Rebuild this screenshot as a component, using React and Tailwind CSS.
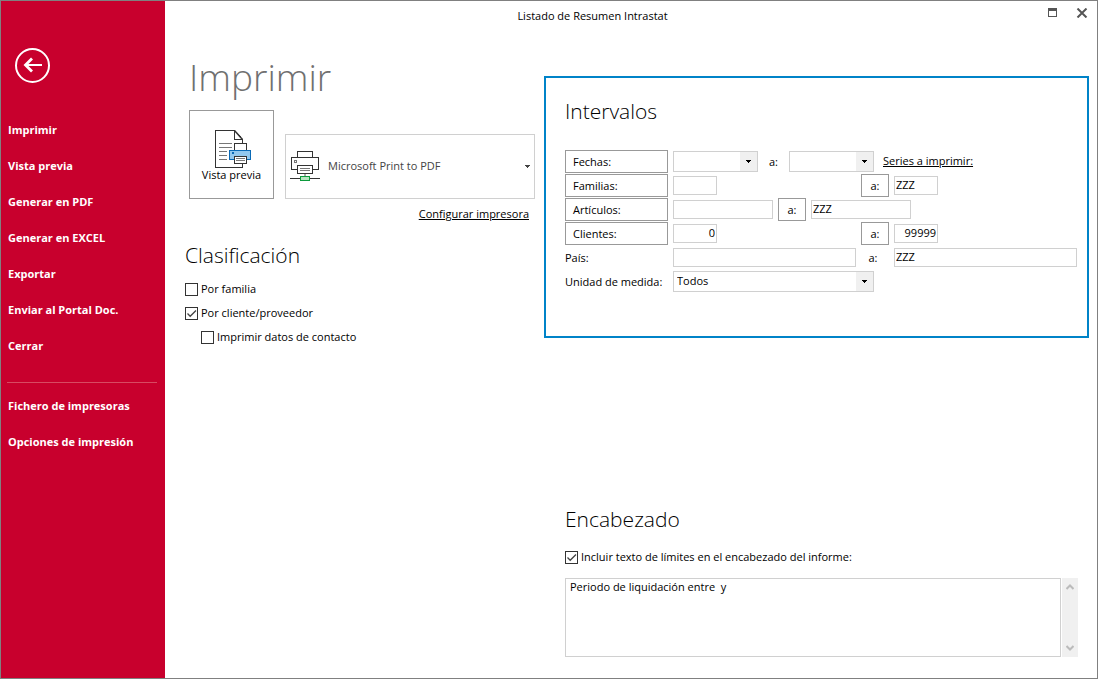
import { useState } from 'react';

const mainActions = [
  'Imprimir',
  'Vista previa',
  'Generar en PDF',
  'Generar en EXCEL',
  'Exportar',
  'Enviar al Portal Doc.',
  'Cerrar',
];

const extraActions = ['Fichero de impresoras', 'Opciones de impresión'];

const BackIcon = () => (
  <svg width="36" height="36" viewBox="0 0 36 36" fill="none" stroke="#fff">
    <circle cx="17.5" cy="17.5" r="16.5" strokeWidth="2" />
    <path d="M10 17H27" strokeWidth="2" />
    <path d="M17 10.5L10.5 17L17 23.5" strokeWidth="2.8" />
  </svg>
);

const PreviewIcon = () => (
  <svg
    width="38"
    height="39"
    viewBox="0 0 38 39"
    fill="#fff"
    stroke="#333"
    shapeRendering="crispEdges"
  >
    <path d="M1.5 1.5H20.5L28.5 10.5V38.5H1.5Z" />
    <path d="M20.5 1.5V10.5H28.5" />
    <path
      d="M20.5 1.5L28.5 10.5"
      shapeRendering="geometricPrecision"
      strokeWidth="1.5"
    />
    <path
      d="M5 14.5H18M5 18.5H18M5 22.5H13M5 26.5H13M5 30.5H13"
      stroke="#777"
    />
    <path d="M20.5 14.5H32.5V21.5H20.5Z" />
    <path d="M15.5 21.5H36.5V30.5H15.5Z" fill="#92c8ee" stroke="#0a6ab6" />
    <path d="M18 23H20V25H18Z" fill="#0a6ab6" stroke="none" />
    <path d="M20.5 27.5H32.5V34.5H20.5Z" />
    <path d="M22 29.5H31M22 31.5H31" stroke="#777" />
  </svg>
);

const PrinterIcon = () => (
  <svg
    width="30"
    height="31"
    viewBox="0 0 30 31"
    fill="#fff"
    stroke="#333"
    shapeRendering="crispEdges"
  >
    <path d="M7.5 0.5H22.5V7.5H7.5Z" />
    <path d="M1.5 6.5H28.5V18.5H1.5Z" />
    <path d="M4.5 9.5H6.5V11.5H4.5Z" stroke="#777" />
    <path d="M7.5 14.5H22.5V22.5H7.5Z" />
    <path d="M10 17.5H20M10 19.5H20" stroke="#777" />
    <path d="M15 23V25" stroke="#aaa" strokeWidth="2" />
    <path d="M0 27.5H30" />
    <path d="M10.5 25.5H19.5V29.5H10.5Z" fill="#b5e3bf" stroke="#0c9a3c" />
  </svg>
);

const Arrow = () => (
  <svg width="5" height="3" viewBox="0 0 5 3" shapeRendering="crispEdges">
    <path d="M0 0H5V1H4V2H3V3H2V2H1V1H0Z" fill="currentColor" />
  </svg>
);

const Checkbox = ({ id, label, checked, onChange }) => (
  <div className="flex h-6 items-center gap-[3px]">
    <span className="grid">
      <input
        id={id}
        type="checkbox"
        checked={checked}
        onChange={e => onChange(e.target.checked)}
        className="col-start-1 row-start-1 size-[13px] appearance-none border border-[#333] bg-white"
      />
      {checked && (
        <svg
          viewBox="0 0 13 13"
          className="pointer-events-none col-start-1 row-start-1 size-[13px]"
          fill="none"
          stroke="#444"
          strokeWidth="1.3"
        >
          <path d="M2.5 6.5L5.2 9.3L11 3.5" />
        </svg>
      )}
    </span>
    <label htmlFor={id}>{label}</label>
  </div>
);

const Select = ({ label, id, options, className }) => (
  <div
    className={`flex h-[21px] shrink-0 border border-[#d0d0d0] bg-white ${className}`}
  >
    <div className="relative flex flex-1">
      <select
        id={id}
        aria-label={label}
        className="w-full appearance-none bg-transparent pl-[3px] outline-none"
      >
        {options.map(option => (
          <option key={option}>{option}</option>
        ))}
      </select>
      <span className="pointer-events-none absolute inset-y-0 right-0 flex w-[17px] items-center justify-center bg-[#f0f0f0]">
        <Arrow />
      </span>
    </div>
  </div>
);

const Field = ({ label, id, value = '', className }) => (
  <input
    id={id}
    type="text"
    aria-label={label}
    defaultValue={value}
    className={`h-[19px] border border-[#d0d0d0] bg-white px-px pb-px outline-none ${className}`}
  />
);

const BoxButton = ({ children, className }) => (
  <button
    type="button"
    className={`h-[23px] shrink-0 border border-[#999] bg-white pt-[2px] ${className}`}
  >
    {children}
  </button>
);

const Row = ({ label, plain, htmlFor, children }) => (
  <div className="flex h-6 items-center gap-[5px]">
    {plain ? (
      <label
        htmlFor={htmlFor}
        className="w-[103px] shrink-0 pt-[2px] whitespace-nowrap"
      >
        {label}
      </label>
    ) : (
      <BoxButton className="w-[103px] pl-[7px] text-left">{label}</BoxButton>
    )}
    {children}
  </div>
);

const Range = ({ children }) => (
  <div className="grid flex-1 grid-cols-[1fr_28px_1fr] items-center gap-[5px]">
    {children}
  </div>
);

const SectionTitle = ({ children }) => (
  <h2 className="text-[21px] leading-8 font-light">{children}</h2>
);

const Sidebar = () => (
  <nav className="flex w-[164px] shrink-0 flex-col bg-[#c8002d] font-bold text-white">
    <button
      type="button"
      aria-label="Volver"
      className="mt-[47px] ml-[14px] size-9"
    >
      <BackIcon />
    </button>
    <div className="mt-[29px] flex flex-col">
      {mainActions.map(action => (
        <button
          key={action}
          type="button"
          className="h-9 pb-px pl-[7px] text-left"
        >
          {action}
        </button>
      ))}
    </div>
    <hr className="mt-[17px] mr-2 mb-[6px] ml-[6px] border-[#d84a62]" />
    <div className="flex flex-col">
      {extraActions.map(action => (
        <button
          key={action}
          type="button"
          className="h-9 pb-px pl-[7px] text-left"
        >
          {action}
        </button>
      ))}
    </div>
  </nav>
);

const TitleBar = () => (
  <header className="flex h-[30px] items-center">
    <div className="flex-1 text-center">Listado de Resumen Intrastat</div>
    <div className="flex w-[77px] items-center justify-end gap-[19px] pr-[9px] pb-[7px]">
      <button type="button" aria-label="Maximizar">
        <svg width="9" height="9" viewBox="0 0 9 9" shapeRendering="crispEdges">
          <path d="M0.5 0.5H8.5V8.5H0.5Z" fill="none" stroke="#555" />
          <path d="M0 0H9V3H0Z" fill="#555" />
        </svg>
      </button>
      <button type="button" aria-label="Cerrar ventana">
        <svg width="12" height="10" viewBox="0 0 12 10">
          <path
            d="M1.5 0.5L10.5 9.5M10.5 0.5L1.5 9.5"
            stroke="#555"
            strokeWidth="2"
          />
        </svg>
      </button>
    </div>
  </header>
);

const Intervals = () => (
  <section className="border-2 border-[#0083c8] pt-[17px] pr-[10px] pb-[43px] pl-[19px]">
    <SectionTitle>Intervalos</SectionTitle>
    <div className="mt-[22px]">
      <Row label="Fechas:">
        <Select label="Fecha desde" options={['']} className="w-[85px]" />
        <span className="w-[21px] pt-[2px] text-center">a:</span>
        <Select label="Fecha hasta" options={['']} className="w-[85px]" />
        <a href="#series" className="ml-1 underline">
          Series a imprimir:
        </a>
      </Row>
      <Row label="Familias:">
        <Range>
          <Field label="Familia desde" className="w-[44px]" />
          <BoxButton>a:</BoxButton>
          <Field label="Familia hasta" value="ZZZ" className="w-[44px]" />
        </Range>
      </Row>
      <Row label="Artículos:">
        <Field label="Artículo desde" className="w-[100px]" />
        <BoxButton className="w-[28px]">a:</BoxButton>
        <Field label="Artículo hasta" value="ZZZ" className="w-[100px]" />
      </Row>
      <Row label="Clientes:">
        <Range>
          <Field
            label="Cliente desde"
            value="0"
            className="w-[44px] text-right"
          />
          <BoxButton>a:</BoxButton>
          <Field
            label="Cliente hasta"
            value="99999"
            className="w-[44px] text-right"
          />
        </Range>
      </Row>
      <Row label="País:" plain htmlFor="pais">
        <Range>
          <Field id="pais" className="w-full" />
          <span className="pt-[2px] pr-1 text-center">a:</span>
          <Field label="País hasta" value="ZZZ" className="w-full" />
        </Range>
      </Row>
      <Row label="Unidad de medida:" plain htmlFor="unidad">
        <Select id="unidad" options={['Todos']} className="w-[201px]" />
      </Row>
    </div>
  </section>
);

const Heading = ({ text, setText, include, setInclude }) => (
  <section className="mt-auto pr-[11px] pb-[21px] pl-[21px]">
    <SectionTitle>Encabezado</SectionTitle>
    <div className="mt-[10px]">
      <Checkbox
        id="incluir"
        label="Incluir texto de límites en el encabezado del informe:"
        checked={include}
        onChange={setInclude}
      />
    </div>
    <div className="mt-[9px] flex h-[79px] gap-px">
      <textarea
        aria-label="Texto del encabezado"
        value={text}
        onChange={e => setText(e.target.value)}
        className="flex-1 resize-none border border-[#d0d0d0] px-1 leading-4 outline-none"
      />
      <div className="flex w-4 flex-col items-center justify-between bg-[#f0f0f0] py-[6px]">
        <svg width="8" height="6" viewBox="0 0 8 6" fill="none">
          <path d="M0.5 5L4 1.5L7.5 5" stroke="#bbb" strokeWidth="2" />
        </svg>
        <svg width="8" height="6" viewBox="0 0 8 6" fill="none">
          <path d="M0.5 1L4 4.5L7.5 1" stroke="#bbb" strokeWidth="2" />
        </svg>
      </div>
    </div>
  </section>
);

const App = () => {
  const [byFamily, setByFamily] = useState(false);
  const [byClient, setByClient] = useState(true);
  const [contact, setContact] = useState(false);
  const [include, setInclude] = useState(true);
  const [text, setText] = useState('Periodo de liquidación entre  y');

  return (
    <div className="flex min-h-screen border border-[#808080] bg-white font-['Open_Sans','Noto_Sans',sans-serif] text-[11px] text-black">
      <Sidebar />
      <main className="flex flex-1 flex-col">
        <TitleBar />
        <div className="flex flex-1 pr-2">
          <div className="w-[379px] shrink-0 pr-[9px] pl-5">
            <h1 className="mt-[22px] ml-1 text-[37px] leading-[48px] font-light text-[#707070]">
              Imprimir
            </h1>
            <div className="mt-[9px] ml-1 flex items-end gap-[11px]">
              <button
                type="button"
                className="flex h-[89px] w-[85px] flex-col items-center border border-[#999] pt-[18px]"
              >
                <span className="pl-[2px]">
                  <PreviewIcon />
                </span>
                <span className="leading-[14px]">Vista previa</span>
              </button>
              <button
                type="button"
                className="flex h-[65px] flex-1 items-center gap-2 border border-[#d0d0d0] px-1 pb-px text-[#444]"
              >
                <PrinterIcon />
                <span className="flex-1 text-left">Microsoft Print to PDF</span>
                <Arrow />
              </button>
            </div>
            <div className="mt-[7px] pr-[6px] text-right leading-4">
              <a href="#configurar" className="underline">
                Configurar impresora
              </a>
            </div>
            <div className="mt-[17px]">
              <SectionTitle>Clasificación</SectionTitle>
            </div>
            <div className="mt-[6px]">
              <Checkbox
                id="familia"
                label="Por familia"
                checked={byFamily}
                onChange={setByFamily}
              />
              <Checkbox
                id="cliente"
                label="Por cliente/proveedor"
                checked={byClient}
                onChange={setByClient}
              />
              <div className="pl-4">
                <Checkbox
                  id="contacto"
                  label="Imprimir datos de contacto"
                  checked={contact}
                  onChange={setContact}
                />
              </div>
            </div>
          </div>
          <div className="flex flex-1 flex-col pt-[45px]">
            <Intervals />
            <Heading
              text={text}
              setText={setText}
              include={include}
              setInclude={setInclude}
            />
          </div>
        </div>
      </main>
    </div>
  );
};

export default App;
